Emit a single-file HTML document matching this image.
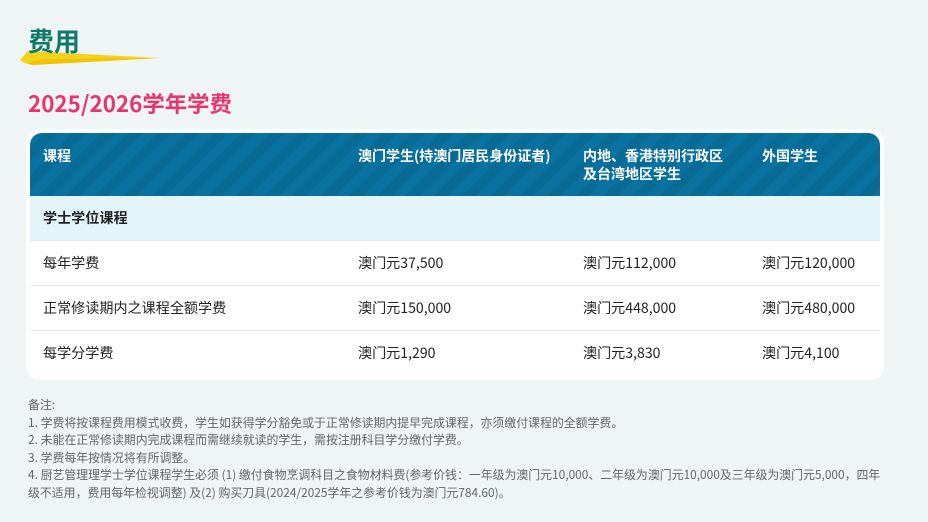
<!DOCTYPE html>
<html><head><meta charset="utf-8"><style>
*{margin:0;padding:0;box-sizing:border-box}
body{width:928px;height:522px;background:#eff4f4;font-family:"Noto Sans CJK SC","Liberation Sans",sans-serif;position:relative;overflow:hidden}
.t1{position:absolute;left:28px;top:24px;font-size:26px;font-weight:bold;color:#0f7a6a;z-index:2;line-height:34px}
.flash{position:absolute;left:14px;top:50px;z-index:1}
.t2{position:absolute;left:28px;top:87px;font-size:22.4px;font-weight:bold;color:#e8356d;line-height:32px}
.card{position:absolute;left:26px;top:129px;width:858px;height:251px;background:#fff;border-radius:14px;padding:4px}
.hd{height:63px;border-radius:12px 12px 0 0;background:repeating-linear-gradient(135deg,#0a72a0 0 10px,#086b96 10px 20px);position:relative;color:#fff;font-weight:bold;font-size:14px}
.row{height:45px;position:relative;font-size:14.1px;color:#222;border-bottom:1px solid #e4e8ea}
.sub{background:#e4f5fa;font-weight:bold}
.c{position:absolute;top:13px;line-height:18px}
.hd .c{top:14px;line-height:18px}
.notes{position:absolute;left:28px;top:396px;font-size:11.9px;color:#666;line-height:17.6px;white-space:nowrap}
</style></head><body>
<svg class="flash" width="145" height="18" viewBox="0 0 145 18"><polygon points="6,10 14,1 145,8 18,15 10,13" fill="#f4d21d"/><polygon points="14,13 28,9 145,8 18,15" fill="#f0c400"/></svg>
<div class="t1">费用</div>
<div class="t2">2025/2026学年学费</div>
<div class="card">
<div class="hd"><div class="c" style="left:13px">课程</div><div class="c" style="left:328px">澳门学生(持澳门居民身份证者)</div><div class="c" style="left:553px">内地、香港特别行政区<br>及台湾地区学生</div><div class="c" style="left:732px">外国学生</div></div>
<div class="row sub"><div class="c" style="left:13px">学士学位课程</div></div>
<div class="row"><div class="c" style="left:13px">每年学费</div><div class="c" style="left:328px">澳门元37,500</div><div class="c" style="left:553px">澳门元112,000</div><div class="c" style="left:732px">澳门元120,000</div></div>
<div class="row"><div class="c" style="left:13px">正常修读期内之课程全额学费</div><div class="c" style="left:328px">澳门元150,000</div><div class="c" style="left:553px">澳门元448,000</div><div class="c" style="left:732px">澳门元480,000</div></div>
<div class="row" style="border:none"><div class="c" style="left:13px">每学分学费</div><div class="c" style="left:328px">澳门元1,290</div><div class="c" style="left:553px">澳门元3,830</div><div class="c" style="left:732px">澳门元4,100</div></div>
</div>
<div class="notes">备注:<br>1. 学费将按课程费用模式收费，学生如获得学分豁免或于正常修读期内提早完成课程，亦须缴付课程的全额学费。<br>2. 未能在正常修读期内完成课程而需继续就读的学生，需按注册科目学分缴付学费。<br>3. 学费每年按情况将有所调整。<br>4. 厨艺管理理学士学位课程学生必须 (1) 缴付食物烹调科目之食物材料费(参考价钱：一年级为澳门元10,000、二年级为澳门元10,000及三年级为澳门元5,000，四年<br>级不适用，费用每年检视调整) 及(2) 购买刀具(2024/2025学年之参考价钱为澳门元784.60)。</div>
</body></html>
